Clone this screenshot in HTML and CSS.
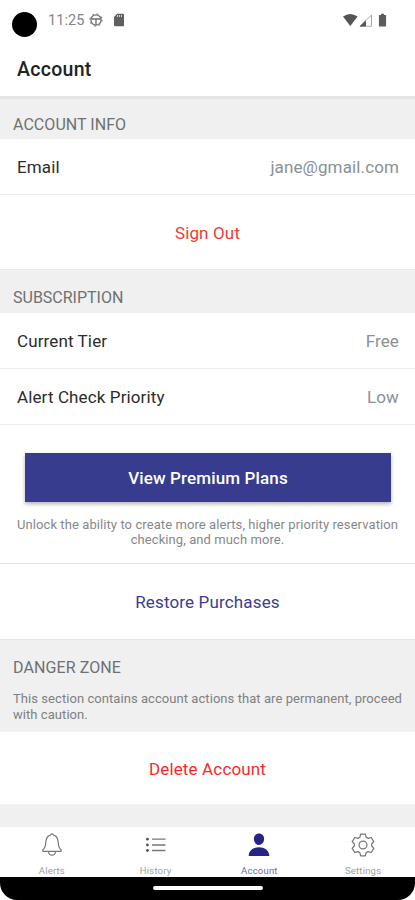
FILE: index.html
```html
<!DOCTYPE html>
<html lang="en">
<head>
<meta charset="utf-8">
<title>Account</title>
<link rel="stylesheet" href="styles.css">
</head>
<body>
<div class="screen">
  <header class="header">
    <div class="status">
      <span class="camera"></span>
      <span class="clock">11:25</span>
      <svg class="status-wheel" width="14" height="14" viewBox="0 0 14 14" fill="none" stroke="#6c6c6c"><circle cx="7" cy="7" r="5.1" stroke-width="1.3"/><circle cx="7" cy="7" r="6.2" stroke-width="1" stroke-dasharray="1.7 3.17"/><path d="M2.5 6h9M7 6v6" stroke-width="1.3"/></svg>
      <svg class="status-card" width="12" height="14" viewBox="0 0 12 14"><path d="M4 .7h6q1 0 1 1v10.600q0 1-1 1H2q-1 0-1-1V4z" fill="#606060"/><path d="M4.500 2v2M6.500 2v2M8.500 2v2" stroke="#ddd" stroke-width=".9"/></svg>
      <svg class="status-signal" width="48" height="16" viewBox="0 0 48 16"><path d="M1 3.500Q8.300-1.500 15.600 3.500L8.300 13z" fill="#555"/><path d="M18 13.200L29.500 2v11.200z" fill="#fff" stroke="#aaa"/><path d="M17.500 13.500L24 7.200v6.300z" fill="#555"/><path d="M37.500 2H39V.700h3V2h1.500q.6 0 .6.600V13q0 .6-.6.600h-6q-.6 0-.6-.600V2.600q0-.6.600-.6z" fill="#5c5c5c"/></svg>
    </div>
    <h1 class="title">Account</h1>
  </header>
  <main class="content">
    <h2 class="section section-info">ACCOUNT INFO</h2>
    <div class="row"><span>Email</span><span class="value">jane@gmail.com</span></div>
    <div class="action signout">Sign Out</div>
    <h2 class="section section-sub">SUBSCRIPTION</h2>
    <div class="row"><span>Current Tier</span><span class="value">Free</span></div>
    <div class="row"><span>Alert Check Priority</span><span class="value">Low</span></div>
    <div class="premium">
      <div class="button">View Premium Plans</div>
      <p class="hint">Unlock the ability to create more alerts, higher priority reservation<br>checking, and much more.</p>
    </div>
    <div class="action restore">Restore Purchases</div>
    <div class="danger">
      <h2>DANGER ZONE</h2>
      <p>This section contains account actions that are permanent, proceed<br>with caution.</p>
    </div>
    <div class="action delete">Delete Account</div>
  </main>
  <nav class="tabs">
    <div class="tab">
      <svg width="24" height="26" viewBox="0 0 24 26" fill="none" stroke="#777" stroke-width="1.200" stroke-linejoin="round"><path d="M12 1.800c-1 0-1.400.6-1.600 1.400C7.300 4.100 6 7 5.800 10.200c-.2 4.500-.8 5.800-2.800 7.600-.6.7-.3 1.500.5 1.500h17c.8 0 1.100-.8.500-1.500-2-1.800-2.600-3.100-2.800-7.600C18 7 16.700 4.100 13.600 3.200 13.400 2.400 13 1.800 12 1.800zM8.400 19.500c.3 2 1.700 3.700 3.600 3.700s3.300-1.700 3.600-3.700"/></svg>
      <span>Alerts</span>
    </div>
    <div class="tab">
      <svg width="24" height="26" viewBox="0 0 24 26"><path d="M8 7.200h13.500M8 13h13.500M8 18.500h13.500" stroke="#777" stroke-width="1.300"/><g fill="#555"><circle cx="3.400" cy="7.200" r="1.400"/><circle cx="3.400" cy="13" r="1.400"/><circle cx="3.400" cy="18.500" r="1.400"/></g></svg>
      <span>History</span>
    </div>
    <div class="tab active">
      <svg width="24" height="26" viewBox="0 0 24 26" fill="#252589"><path d="M12 1.600c3.300 0 5.300 2.600 5.100 5.700-.2 3.200-2.400 5.700-5.100 5.700s-4.900-2.500-5.100-5.700c-.2-3.200 1.900-5.700 5.100-5.700zM2.200 24c-.4 0-.6-.3-.5-.8C2.300 18.300 6.500 15.300 12 15.300s9.700 3 10.300 7.900c.1.500-.1.800-.5.800z"/></svg>
      <span>Account</span>
    </div>
    <div class="tab">
      <svg width="26" height="26" viewBox="0 0 26 26" fill="none" stroke="#777" stroke-width="1.250" stroke-linejoin="round"><circle cx="13" cy="13" r="3.900"/><path d="M10.700 2.200h4.600l.8 3 2 1.200 3.100-.9 2.600 4.200-2.100 2.300v2l2.100 2.300-2.600 4.200-3.100-.9-2 1.200-.8 3h-4.600l-.8-3-2-1.200-3.100.9-2.600-4.200L4.300 14v-2L2.200 9.700l2.600-4.200 3.100.9 2-1.200z"/></svg>
      <span>Settings</span>
    </div>
  </nav>
  <div class="gesture"><div class="surface"><span class="pill"></span></div></div>
</div>
</body>
</html>
```
FILE: styles.css
```css
* { box-sizing: border-box; }
body { margin: 0; background: #fff; font-family: Roboto, "Liberation Sans", sans-serif; }
h1, h2, p { margin: 0; font-weight: 400; }
.screen { width: 415px; height: 900px; display: flex; flex-direction: column; overflow: hidden; }
.header { height: 96px; flex: none; background: #fff; }
.status { height: 48px; display: flex; align-items: flex-start; padding: 12px 25px 0 12px; }
.camera { width: 25px; height: 25px; border-radius: 50%; background: #000; }
.clock { margin-left: 11px; width: 41px; font-size: 14.500px; line-height: 18px; color: #858585; letter-spacing: .1px; }
.status-wheel { margin-top: 1px; }
.status-card { margin-left: 10px; margin-top: 1px; }
.status-signal { margin-left: auto; margin-top: 1px; }
.title { padding-left: 17px; font-size: 19.500px; line-height: 43px; font-weight: 500; letter-spacing: .3px; color: #222; }
.content { flex: 1; min-height: 0; background: #f0f0f0; display: flex; flex-direction: column; }
.section, .danger h2 { font-size: 16px; letter-spacing: .05px; color: #6e7173; }
.section { flex: none; padding: 0 13px; line-height: 20px; }
.section-info { height: 43px; border-top: 3px solid #e4e4e4; padding-top: 16px; }
.section-sub { height: 44px; border-top: 1px solid #e9e9e9; padding-top: 18px; letter-spacing: 0; }
.row { flex: none; height: 56px; padding: 1px 16px 0 17px; display: flex; justify-content: space-between; align-items: center; background: #fff; border-bottom: 1px solid #ebebeb; font-size: 17px; color: #2c2c2c; letter-spacing: .12px; }
.value { color: #8a9094; }
.action { flex: none; display: flex; align-items: center; justify-content: center; background: #fff; font-size: 17px; letter-spacing: .15px; }
.signout { height: 74px; color: #f23838; padding-top: 2px; }
.premium { flex: none; height: 139px; padding: 28px 0 0; background: #fff; border-bottom: 1px solid #e5e5e5; text-align: center; }
.button { width: 366px; height: 49px; margin: 0 24px 0 25px; display: flex; align-items: center; justify-content: center; background: #383c8f; box-shadow: 0 2px 4px rgba(0,0,0,.3); color: #fff; font-size: 17px; font-weight: 500; letter-spacing: .13px; }
.hint { margin-top: 15px; font-size: 13px; line-height: 15px; letter-spacing: .085px; color: #85888a; white-space: nowrap; }
.restore { height: 75px; color: #3c3c91; padding-top: 1px; }
.danger { flex: none; height: 93px; padding: 18px 13px 0; border-top: 1px solid #e7e7e7; }
.danger h2 { line-height: 20px; letter-spacing: .1px; }
.danger p { margin-top: 13px; font-size: 13px; line-height: 16px; letter-spacing: .06px; color: #7e8082; white-space: nowrap; }
.delete { height: 72px; color: #fb2828; padding-top: 2px; }
.tabs { flex: none; height: 50px; display: grid; grid-template-columns: repeat(4, 1fr); background: #fff; overflow: hidden; }
.tab { display: flex; flex-direction: column; align-items: center; padding-top: 5px; font-size: 9.500px; line-height: 12px; color: #a0a0a0; letter-spacing: .2px; }
.tab svg { flex: none; }
.tab span { margin-top: 7px; }
.active { color: #6c6ca8; }
.gesture { flex: none; height: 23px; background: #fff; }
.surface { height: 23px; background: #000; border-radius: 0 0 17px 17px; display: flex; justify-content: center; padding-top: 9px; }
.pill { width: 110px; height: 4px; border-radius: 2px; background: #fff; }
```
